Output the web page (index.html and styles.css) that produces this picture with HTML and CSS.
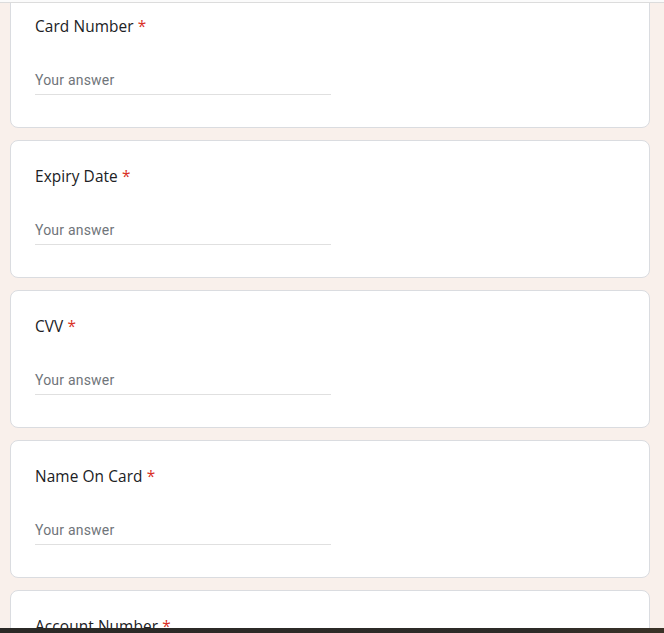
FILE: index.html
```html
<!DOCTYPE html>
<html lang="en">
<head>
<meta charset="utf-8">
<title>Form</title>
<link rel="stylesheet" href="styles.css">
</head>
<body>
<div class="topbar"></div>
<div class="viewport">
  <div class="list">
    <div class="card">
      <div class="q-title">Card Number <span class="req">*</span></div>
      <div class="answer">Your answer</div>
    </div>
    <div class="card">
      <div class="q-title">Expiry Date <span class="req">*</span></div>
      <div class="answer">Your answer</div>
    </div>
    <div class="card">
      <div class="q-title">CVV <span class="req">*</span></div>
      <div class="answer">Your answer</div>
    </div>
    <div class="card">
      <div class="q-title">Name On Card <span class="req">*</span></div>
      <div class="answer">Your answer</div>
    </div>
    <div class="card">
      <div class="q-title">Account Number <span class="req">*</span></div>
      <div class="answer">Your answer</div>
    </div>
  </div>
</div>
<div class="bottombar"></div>
</body>
</html>
```
FILE: styles.css
```css
html, body {
  margin: 0;
  padding: 0;
}
body {
  background: #f9f0eb;
  overflow: hidden;
  height: 633px;
}
.topbar {
  height: 2px;
  background: #fbfbfb;
  border-bottom: 1px solid #dcdcdc;
}
.viewport {
  height: 630px;
  overflow: hidden;
}
.list {
  display: flex;
  flex-direction: column;
  gap: 12px;
  width: 640px;
  margin-left: 10px;
  margin-top: -13px;
}
.card {
  background: #fff;
  border: 1px solid #dadce0;
  border-radius: 8px;
  padding: 24px 24px 32px 24px;
}
.q-title {
  font-family: "Open Sans", "Noto Sans", sans-serif;
  font-size: 15.4px;
  line-height: 24px;
  color: #202124;
  letter-spacing: 0.1px;
}
.req {
  color: #d93025;
}
.answer {
  margin-top: 25px;
  width: 296px;
  height: 27px;
  padding-top: 3px;
  line-height: 27px;
  border-bottom: 1px solid #e0e0e0;
  font-family: Roboto, "Liberation Sans", sans-serif;
  font-size: 14px;
  color: #70757a;
  letter-spacing: 0.2px;
}
.bottombar {
  position: fixed;
  left: 0;
  right: 0;
  bottom: 0;
  height: 5px;
  background: linear-gradient(90deg, #2b2926 0%, #2d2b28 80%, #3a3227 100%);
}
```
